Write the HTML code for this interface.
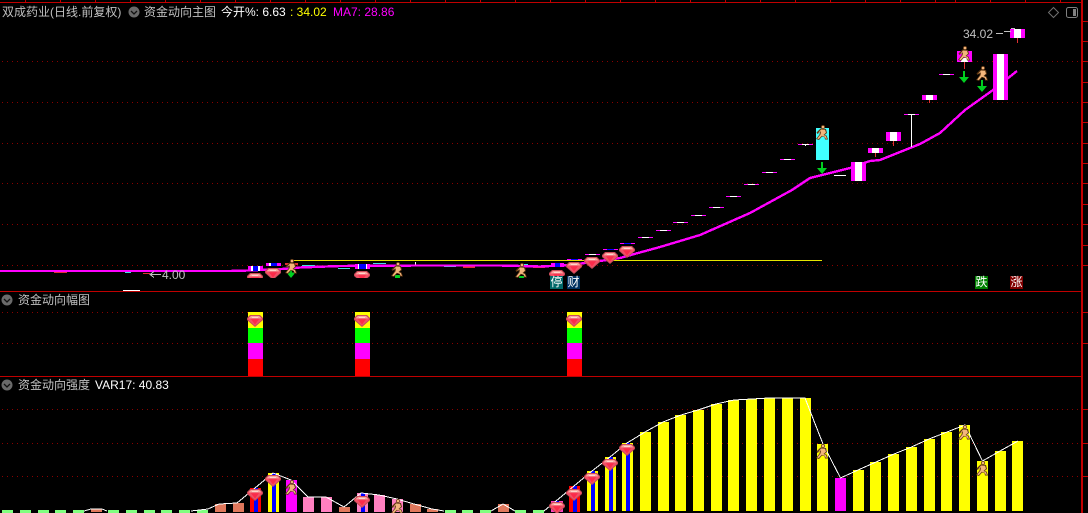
<!DOCTYPE html>
<html><head><meta charset="utf-8">
<style>
html,body{margin:0;padding:0;background:#000;}
#p{position:relative;width:1088px;height:513px;overflow:hidden;background:#000;font-family:"Liberation Sans","WenQuanYi Zen Hei","Noto Sans CJK SC",sans-serif;font-size:12px;line-height:14px;color:#c0c0c0;}
#p span{position:absolute;white-space:nowrap;}
svg{position:absolute;left:0;top:0;}
.box{width:13px;height:13px;line-height:13px;text-align:center;color:#fff;font-size:12px;}
</style></head><body><div id="p">
<svg width="1088" height="513" viewBox="0 0 1088 513">
<defs>
<symbol id="g" viewBox="0 0 16 12" overflow="visible">
<polygon points="3,0 13,0 16,3 16,5 8,12 0,5 0,3" fill="#c04a55"/>
<polygon points="3.5,.8 12.5,.8 15,3.2 15,4.8 8,10.8 1,4.8 1,3.2" fill="#f25066"/>
<polygon points="4,1 12,1 14.5,3.4 1.5,3.4" fill="#f9a8a0"/>
<polygon points="4,4.2 12,4.2 8,9.6" fill="#fb2b4a"/>
<rect x="5" y="2" width="6" height="1" fill="#ffd4cc"/>
</symbol>
<symbol id="r" viewBox="0 0 12 15" overflow="visible">
<circle cx="7" cy="2" r="2" fill="#5c3410"/>
<polygon points="4.5,3.5 10,4 11,8 8.5,10 10.5,10.5 12,14.5 9,14.5 8.5,12 6,11.5 3,15 0,14 3.5,9.5 4,7 1.5,9 0.5,7.5" fill="#5c3410"/>
<circle cx="7" cy="2" r="1.3" fill="#f3b67c"/>
<polygon points="5,4.5 9,4.8 10,7.6 7.5,10 9.8,11 11,13.8 9.7,13.8 8.7,11.8 5.8,10.8 2.8,14 1.2,13.6 4.6,9.3 5,6.2 2,8.2" fill="#f3b67c"/>
</symbol>
<symbol id="a" viewBox="0 0 10 12" overflow="visible">
<path d="M4 0H6V6H10L5 12 0 6H4Z" fill="#00d020"/>
</symbol>
<clipPath id="c1"><rect x="0" y="0" width="1088" height="278"/></clipPath>
<clipPath id="c2"><rect x="0" y="0" width="1088" height="276"/></clipPath>
</defs>

<!-- dotted grid -->
<g stroke="#8a0000" stroke-width="1" stroke-dasharray="1 4" shape-rendering="crispEdges">
<path d="M2 61.5H1081M2 102.5H1081M2 143.5H1081M2 183.5H1081M2 224.5H1081M2 265.5H1081M2 312.5H1081M2 343.5H1081M2 409.5H1081M2 443.5H1081M2 476.5H1081"/>
</g>

<!-- frame -->
<g stroke="#c00000" stroke-width="1" shape-rendering="crispEdges" fill="none">
<path d="M0 2.5H1082M0 291.5H1082M0 376.5H1082"/>
<path d="M25.5 0V2M60.5 0V2M95.5 0V2M130.5 0V2M165.5 0V2M200.5 0V2M235.5 0V2M270.5 0V2M305.5 0V2M340.5 0V2M375.5 0V2M410.5 0V2M445.5 0V2M480.5 0V2M515.5 0V2M550.5 0V2M585.5 0V2M620.5 0V2M655.5 0V2M690.5 0V2M725.5 0V2M760.5 0V2M795.5 0V2M830.5 0V2M865.5 0V2M900.5 0V2M935.5 0V2M955.5 0V2M990.5 0V2M1025.5 0V2M1060.5 0V2"/>
<path d="M1082 21.5H1088M1082 41.5H1088M1082 61.5H1088M1082 82.5H1088M1082 102.5H1088M1082 122.5H1088M1082 143.5H1088M1082 163.5H1088M1082 183.5H1088M1082 204.5H1088M1082 224.5H1088M1082 245.5H1088M1082 265.5H1088M1082 312.5H1088M1082 343.5H1088M1082 409.5H1088M1082 443.5H1088M1082 476.5H1088"/>
</g>
<rect x="1081" y="0" width="2" height="513" fill="#c00000"/>

<!-- top right icons -->
<polygon points="1053.5,7.5 1058.5,12.5 1053.5,17.5 1048.5,12.5" fill="none" stroke="#707070"/>
<rect x="1066.5" y="7.5" width="11" height="10" rx="2" fill="none" stroke="#808080"/>
<rect x="1073" y="9" width="3" height="7" fill="#808080"/>

<!-- main chart thin candles -->
<g shape-rendering="crispEdges">
<rect x="293" y="260" width="529" height="1" fill="#e6e600"/>
<rect x="1" y="271" width="6" height="1" fill="#40e0e0"/>
<rect x="54" y="272" width="13" height="1" fill="#e03030"/>
<rect x="125" y="272" width="6" height="1" fill="#40e0e0"/>
<rect x="143" y="273" width="7" height="1" fill="#e03030"/>
<rect x="214" y="270" width="16" height="1" fill="#e03030"/>
<rect x="123" y="290" width="17" height="1" fill="#fff"/>
<rect x="302" y="265" width="13" height="2" fill="#40e0e0"/>
<rect x="338" y="268" width="12" height="1" fill="#40e0e0"/>
<rect x="373" y="263" width="13" height="1" fill="#40e0e0"/>
<rect x="415" y="262" width="1" height="3" fill="#fff"/>
<rect x="444" y="266" width="12" height="1" fill="#40e0e0"/>
<rect x="463" y="266" width="12" height="2" fill="#e03030"/>
<rect x="533" y="267" width="12" height="1" fill="#e03030"/>
<rect x="524" y="264" width="4" height="1" fill="#40e0e0"/>
</g>
<polyline shape-rendering="crispEdges" fill="none" stroke="#ff00ff" stroke-width="2.4" points="0,271 230,271 248,270.5 282,269 300,267.5 340,266 420,265.5 500,265.5 540,266.5 570,265 600,261 620,258 638,253 660,247 700,235 750,213 792,190 810,178 850,168 870,161 880,160 900,152 920,144 940,133 965,110 993,90 1017,71"/>
<g shape-rendering="crispEdges">
<rect x="248" y="266" width="15" height="5" fill="#ff00ff"/><rect x="253" y="266" width="5" height="5" fill="#0000ff"/><rect x="251" y="266" width="2" height="5" fill="#fff"/><rect x="258" y="266" width="2" height="5" fill="#fff"/>
<rect x="266" y="263" width="15" height="3" fill="#ff00ff"/><rect x="271" y="263" width="6" height="3" fill="#0000ff"/><rect x="269" y="263" width="2" height="3" fill="#fff"/>
<rect x="285" y="263" width="13" height="2" fill="#e03030"/>
<rect x="355" y="264" width="15" height="5" fill="#ff00ff"/><rect x="359" y="264" width="7" height="5" fill="#0000ff"/><rect x="358" y="264" width="1" height="5" fill="#fff"/><rect x="366" y="264" width="1" height="5" fill="#fff"/>
<rect x="551" y="263" width="13" height="4" fill="#ff00ff"/><rect x="555" y="263" width="5" height="4" fill="#0000ff"/>
<rect x="567" y="259" width="15" height="1" fill="#ff00ff"/><rect x="571" y="259" width="7" height="1" fill="#0000ff"/>
<rect x="585" y="254" width="15" height="1" fill="#ff00ff"/><rect x="589" y="254" width="7" height="1" fill="#fff"/>
<rect x="603" y="249" width="15" height="1" fill="#ff00ff"/><rect x="607" y="249" width="7" height="1" fill="#0000ff"/>
<rect x="620" y="243" width="15" height="1" fill="#ff00ff"/><rect x="624" y="243" width="7" height="1" fill="#0000ff"/>
<rect x="638" y="237" width="15" height="1" fill="#ff00ff"/><rect x="642" y="237" width="7" height="1" fill="#fff"/>
<rect x="656" y="230" width="15" height="1" fill="#ff00ff"/><rect x="660" y="230" width="7" height="1" fill="#fff"/>
<rect x="673" y="222" width="15" height="1" fill="#ff00ff"/><rect x="677" y="222" width="7" height="1" fill="#fff"/>
<rect x="691" y="215" width="15" height="1" fill="#ff00ff"/><rect x="695" y="215" width="7" height="1" fill="#fff"/>
<rect x="709" y="207" width="15" height="1" fill="#ff00ff"/><rect x="713" y="207" width="7" height="1" fill="#fff"/>
<rect x="726" y="196" width="15" height="1" fill="#ff00ff"/><rect x="730" y="196" width="7" height="1" fill="#fff"/>
<rect x="744" y="184" width="15" height="1" fill="#ff00ff"/><rect x="748" y="184" width="7" height="1" fill="#fff"/>
<rect x="762" y="172" width="15" height="1" fill="#ff00ff"/><rect x="766" y="172" width="7" height="1" fill="#fff"/>
<rect x="780" y="159" width="15" height="1" fill="#ff00ff"/><rect x="784" y="159" width="7" height="1" fill="#fff"/>
<rect x="798" y="144" width="15" height="1" fill="#ff00ff"/><rect x="802" y="144" width="7" height="1" fill="#fff"/><rect x="805" y="144" width="1" height="2" fill="#fff"/>
<rect x="816" y="128" width="13" height="32" fill="#40ffff"/>
<rect x="834" y="175" width="12" height="1" fill="#fff"/>
<rect x="851" y="162" width="15" height="19" fill="#ff00ff"/><rect x="855" y="162" width="7" height="19" fill="#fff"/>
<rect x="868" y="148" width="15" height="5" fill="#ff00ff"/><rect x="872" y="148" width="7" height="5" fill="#fff"/><rect x="875" y="153" width="1" height="4" fill="#e03030"/>
<rect x="886" y="132" width="15" height="9" fill="#ff00ff"/><rect x="890" y="132" width="7" height="9" fill="#fff"/><rect x="893" y="141" width="1" height="5" fill="#e03030"/>
<rect x="904" y="114" width="15" height="1" fill="#ff00ff"/><rect x="908" y="114" width="7" height="1" fill="#fff"/><rect x="911" y="114" width="1" height="33" fill="#fff"/>
<rect x="922" y="95" width="15" height="5" fill="#ff00ff"/><rect x="926" y="95" width="7" height="5" fill="#fff"/><rect x="929" y="100" width="1" height="3" fill="#e03030"/>
<rect x="939" y="74" width="15" height="1" fill="#ff00ff"/><rect x="943" y="74" width="7" height="1" fill="#fff"/>
<rect x="957" y="51" width="15" height="11" fill="#ff00ff"/><rect x="961" y="58" width="7" height="4" fill="#fff"/><rect x="964" y="62" width="1" height="7" fill="#e03030"/>
<rect x="993" y="54" width="15" height="46" fill="#ff00ff"/><rect x="997" y="54" width="7" height="46" fill="#fff"/>
<rect x="1010" y="29" width="15" height="9" fill="#ff00ff"/><rect x="1014" y="29" width="7" height="9" fill="#fff"/><rect x="1017" y="38" width="1" height="5" fill="#e03030"/>
</g>
<!-- label leaders -->
<g shape-rendering="crispEdges" fill="none" stroke="#c0c0c0">
<path d="M996 33.5H1003M1004 31.5H1011M1011 28.5H1015"/>
<path d="M150 274.5H161M154 271.5 150 274.5 154 277.5"/>
</g>

<!-- main icons -->
<g clip-path="url(#c1)">
<use href="#g" x="247" y="273" width="16" height="12"/>
<use href="#g" x="265" y="268" width="16" height="12"/>
<use href="#g" x="354" y="271" width="16" height="12"/>
</g>
<g clip-path="url(#c2)"><use href="#g" x="549" y="270" width="16" height="12"/></g>
<use href="#g" x="566" y="262" width="16" height="12"/>
<use href="#g" x="584" y="257" width="16" height="12"/>
<use href="#g" x="602" y="252" width="16" height="12"/>
<use href="#g" x="619" y="246" width="16" height="12"/>
<use href="#a" x="286" y="267" width="10" height="11"/>
<rect x="395" y="275" width="5" height="3" fill="#00d020"/>
<rect x="519" y="276" width="5" height="2" fill="#00d020"/>
<use href="#a" x="817" y="162" width="10" height="12"/>
<use href="#a" x="959" y="71" width="10" height="12"/>
<use href="#a" x="977" y="80" width="10" height="12"/>
<use href="#r" x="285" y="259" width="12" height="15"/>
<use href="#r" x="391" y="262" width="12" height="15"/>
<use href="#r" x="515" y="263" width="12" height="15"/>
<use href="#r" x="816" y="125" width="12" height="15"/>
<use href="#r" x="958" y="46" width="12" height="15"/>
<use href="#r" x="976" y="66" width="12" height="15"/>

<!-- panel 2 -->
<g shape-rendering="crispEdges">
<rect x="248" y="312" width="15" height="16" fill="#ff0"/><rect x="248" y="328" width="15" height="15" fill="#0f0"/><rect x="248" y="343" width="15" height="16" fill="#f0f"/><rect x="248" y="359" width="15" height="17" fill="#f00"/>
<rect x="355" y="312" width="15" height="16" fill="#ff0"/><rect x="355" y="328" width="15" height="15" fill="#0f0"/><rect x="355" y="343" width="15" height="16" fill="#f0f"/><rect x="355" y="359" width="15" height="17" fill="#f00"/>
<rect x="567" y="312" width="15" height="16" fill="#ff0"/><rect x="567" y="328" width="15" height="15" fill="#0f0"/><rect x="567" y="343" width="15" height="16" fill="#f0f"/><rect x="567" y="359" width="15" height="17" fill="#f00"/>
</g>
<use href="#g" x="247" y="315" width="16" height="12"/>
<use href="#g" x="354" y="315" width="16" height="12"/>
<use href="#g" x="566" y="315" width="16" height="12"/>

<!-- panel 3 bars -->
<g shape-rendering="crispEdges">
<g fill="#80ff80">
<rect x="2" y="510" width="11" height="3"/><rect x="20" y="510" width="11" height="3"/><rect x="38" y="510" width="11" height="3"/><rect x="55" y="510" width="11" height="3"/><rect x="73" y="510" width="11" height="3"/><rect x="108" y="510" width="11" height="3"/><rect x="126" y="510" width="11" height="3"/><rect x="144" y="510" width="11" height="3"/><rect x="161" y="510" width="11" height="3"/><rect x="179" y="510" width="11" height="3"/><rect x="197" y="510" width="11" height="3"/><rect x="445" y="510" width="11" height="3"/><rect x="462" y="510" width="11" height="3"/><rect x="480" y="510" width="11" height="3"/><rect x="515" y="510" width="11" height="3"/><rect x="533" y="510" width="11" height="3"/>
</g>
<g fill="#e0785c">
<rect x="91" y="509" width="11" height="3"/><rect x="215" y="504" width="11" height="8"/><rect x="233" y="503" width="11" height="9"/><rect x="339" y="507" width="11" height="5"/><rect x="410" y="504" width="11" height="8"/><rect x="427" y="509" width="11" height="3"/><rect x="498" y="504" width="11" height="8"/>
</g>
<rect x="250" y="488" width="11" height="24" fill="#f00"/><rect x="254" y="488" width="4" height="24" fill="#00f"/>
<rect x="268" y="473" width="11" height="39" fill="#ff0"/><rect x="272" y="473" width="4" height="39" fill="#00f"/>
<rect x="286" y="480" width="11" height="32" fill="#f0f"/>
<g fill="#ff80c0">
<rect x="303" y="497" width="11" height="15"/><rect x="321" y="497" width="11" height="15"/><rect x="357" y="493" width="11" height="19"/><rect x="374" y="495" width="11" height="17"/><rect x="392" y="499" width="11" height="13"/>
</g>
<rect x="361" y="493" width="4" height="19" fill="#00f"/>
<rect x="551" y="501" width="12" height="11" fill="#ff40c0"/><rect x="555" y="501" width="4" height="11" fill="#00f"/>
<rect x="569" y="486" width="11" height="26" fill="#f00"/><rect x="573" y="486" width="4" height="26" fill="#00f"/>
<rect x="587" y="471" width="11" height="40" fill="#ff0"/><rect x="591" y="471" width="4" height="40" fill="#00f"/>
<rect x="605" y="457" width="11" height="54" fill="#ff0"/><rect x="609" y="457" width="4" height="54" fill="#00f"/>
<rect x="622" y="443" width="11" height="68" fill="#ff0"/><rect x="626" y="443" width="4" height="68" fill="#00f"/>
<g fill="#ff0">
<rect x="640" y="432" width="11" height="79"/><rect x="658" y="422" width="11" height="89"/><rect x="675" y="415" width="11" height="96"/><rect x="693" y="410" width="11" height="101"/><rect x="711" y="404" width="11" height="107"/><rect x="728" y="400" width="11" height="111"/><rect x="746" y="399" width="11" height="112"/><rect x="764" y="398" width="11" height="113"/><rect x="782" y="398" width="11" height="113"/><rect x="800" y="398" width="11" height="113"/><rect x="817" y="444" width="11" height="67"/><rect x="853" y="470" width="11" height="41"/><rect x="870" y="462" width="11" height="49"/><rect x="888" y="454" width="11" height="57"/><rect x="906" y="447" width="11" height="64"/><rect x="924" y="439" width="11" height="72"/><rect x="941" y="432" width="11" height="79"/><rect x="959" y="425" width="11" height="86"/><rect x="977" y="461" width="11" height="50"/><rect x="995" y="451" width="11" height="60"/><rect x="1012" y="441" width="11" height="70"/>
</g>
<rect x="835" y="478" width="11" height="33" fill="#f0f"/>
</g>
<g shape-rendering="crispEdges" fill="none" stroke="#fff">
<polyline points="84,511 91,509 102,509 107,511"/>
<polyline points="191,511 208,509 219,504 237,503 255,488 273,473 291,480 308,497 326,497 344,507 361,493 379,495 397,499 414,504 432,509 444,511"/>
<polyline points="491,511 503,504 515,511"/>
<polyline points="544,511 556,501 574,486 592,471 610,457 627,443 645,432 663,422 681,415 698,410 716,404 734,400 752,399 769,398 805,398 823,444 840.5,478 858,470 876,462 894,454 911.5,447 929,439 947,432 965,425 982.5,461 1000,451 1018,441"/>
</g>
<use href="#g" x="247" y="489" width="16" height="12"/>
<use href="#g" x="265" y="475" width="16" height="12"/>
<use href="#g" x="354" y="496" width="16" height="12"/>
<use href="#g" x="549" y="502" width="16" height="12"/>
<use href="#g" x="566" y="489" width="16" height="12"/>
<use href="#g" x="584" y="473" width="16" height="12"/>
<use href="#g" x="602" y="459" width="16" height="12"/>
<use href="#g" x="619" y="444" width="16" height="12"/>
<use href="#r" x="285" y="480" width="12" height="15"/>
<use href="#r" x="391" y="499" width="12" height="15"/>
<use href="#r" x="816" y="444" width="12" height="15"/>
<use href="#r" x="958" y="425" width="12" height="15"/>
<use href="#r" x="976" y="461" width="12" height="15"/>

<!-- panel chevrons -->
<g>
<circle cx="134" cy="12" r="5.5" fill="#6a6a6a"/><path d="M131 11 134 14 137 11" fill="none" stroke="#111" stroke-width="1.3"/>
<circle cx="7" cy="300" r="5.5" fill="#6a6a6a"/><path d="M4 299 7 302 10 299" fill="none" stroke="#111" stroke-width="1.3"/>
<circle cx="7" cy="385" r="5.5" fill="#6a6a6a"/><path d="M4 384 7 387 10 384" fill="none" stroke="#111" stroke-width="1.3"/>
</g>
</svg>

<span style="left:2px;top:5px;">双成药业(日线.前复权)</span>
<span style="left:144px;top:5px;">资金动向主图</span>
<span style="left:221px;top:5px;color:#fff;">今开%: 6.63</span>
<span style="left:290px;top:5px;color:#ff0;">: 34.02</span>
<span style="left:333px;top:5px;color:#f0f;">MA7: 28.86</span>
<span style="left:18px;top:293px;">资金动向幅图</span>
<span style="left:18px;top:378px;">资金动向强度</span>
<span style="left:95px;top:378px;color:#fff;">VAR17: 40.83</span>
<span style="left:963px;top:27px;">34.02</span>
<span style="left:162px;top:268px;">4.00</span>
<span class="box" style="left:550px;top:276px;background:#006868;">停</span>
<span class="box" style="left:567px;top:276px;background:#003060;">财</span>
<span class="box" style="left:975px;top:276px;background:#008000;">跌</span>
<span class="box" style="left:1010px;top:276px;background:#800000;">涨</span>
</div></body></html>
